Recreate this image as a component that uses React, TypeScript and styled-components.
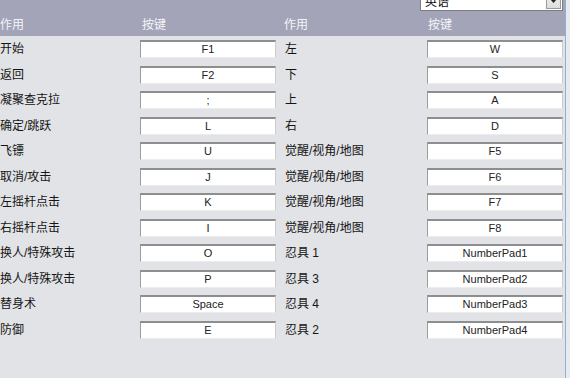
import React from "react";
import styled, { createGlobalStyle } from "styled-components";

const GlobalStyle = createGlobalStyle`
  html, body {
    margin: 0;
    padding: 0;
    background: #e2e3e7;
    overflow: hidden;
  }
  * { box-sizing: border-box; }
`;

const FONT = `"Liberation Sans", "Noto Sans CJK SC", sans-serif`;

const Window = styled.div`
  display: flex;
  width: 570px;
  height: 378px;
  font-family: ${FONT};
`;

const Panel = styled.div`
  position: relative;
  width: 565px;
  height: 100%;
  background: #e2e3e7;
`;

const FrameEdge = styled.div`
  flex: 1;
  border-left: 1px solid #94aecd;
  background: #e6ebf1;
`;

const Columns = styled.div`
  display: grid;
  grid-template-columns: 140px 136px 151px 136px;
`;

const HeaderBand = styled(Columns)`
  height: 36px;
  background: #a4a4b8;
  align-items: end;
  padding-bottom: 4px;
`;

const HeaderCell = styled.div<{ $indent: number }>`
  padding-left: ${(p) => p.$indent}px;
  color: #f4f4f8;
  font-size: 12px;
  line-height: 14px;
`;

const Rows = styled.div`
  display: grid;
  grid-auto-rows: 18px;
  row-gap: 7.5px;
  padding-top: 4px;
`;

const Row = styled(Columns)`
  align-items: center;
`;

const Label = styled.div<{ $indent: number }>`
  padding-left: ${(p) => p.$indent}px;
  color: #151515;
  font-size: 12px;
  line-height: 14px;
  white-space: nowrap;
  overflow: hidden;
`;

const KeyBox = styled.div`
  height: 18px;
  background: #ffffff;
  border-top: 2px solid #8e8e8e;
  border-left: 1px solid #9c9c9c;
  border-right: 1px solid #cdcdcd;
  border-bottom: 1px solid #ececec;
  display: flex;
  align-items: center;
  justify-content: center;
  font-size: 11px;
  color: #222;
  line-height: 13px;
`;

const Dropdown = styled.div`
  position: absolute;
  left: 420px;
  top: -10px;
  width: 143px;
  height: 21px;
  background: #fff;
  border: 1px solid #7d7d85;
  display: flex;
  align-items: center;
  justify-content: space-between;
  padding-left: 4px;
  font-size: 12px;
  color: #111;
`;

const DropButton = styled.div`
  width: 15px;
  height: 17px;
  margin-right: 1px;
  background: linear-gradient(#f4f4f4, #dcdcdc);
  border: 1px solid #9a9a9a;
  display: flex;
  align-items: center;
  justify-content: center;
`;

type Binding = [string, string, string, string];

const bindings: Binding[] = [
  ["开始", "F1", "左", "W"],
  ["返回", "F2", "下", "S"],
  ["凝聚查克拉", ";", "上", "A"],
  ["确定/跳跃", "L", "右", "D"],
  ["飞镖", "U", "觉醒/视角/地图", "F5"],
  ["取消/攻击", "J", "觉醒/视角/地图", "F6"],
  ["左摇杆点击", "K", "觉醒/视角/地图", "F7"],
  ["右摇杆点击", "I", "觉醒/视角/地图", "F8"],
  ["换人/特殊攻击", "O", "忍具 1", "NumberPad1"],
  ["换人/特殊攻击", "P", "忍具 3", "NumberPad2"],
  ["替身术", "Space", "忍具 4", "NumberPad3"],
  ["防御", "E", "忍具 2", "NumberPad4"],
];

export default function App() {
  return (
    <>
      <GlobalStyle />
      <Window>
        <Panel>
          <HeaderBand>
            <HeaderCell $indent={0}>作用</HeaderCell>
            <HeaderCell $indent={2}>按键</HeaderCell>
            <HeaderCell $indent={8}>作用</HeaderCell>
            <HeaderCell $indent={1}>按键</HeaderCell>
          </HeaderBand>
          <Dropdown>
            <span>英语</span>
            <DropButton>
              <svg width="7" height="4" viewBox="0 0 7 4">
                <path d="M0 0 L7 0 L3.5 4 Z" fill="#222" />
              </svg>
            </DropButton>
          </Dropdown>
          <Rows>
            {bindings.map(([a, k1, b, k2], i) => (
              <Row key={i}>
                <Label $indent={0}>{a}</Label>
                <KeyBox>{k1}</KeyBox>
                <Label $indent={9}>{b}</Label>
                <KeyBox>{k2}</KeyBox>
              </Row>
            ))}
          </Rows>
        </Panel>
        <FrameEdge />
      </Window>
    </>
  );
}
